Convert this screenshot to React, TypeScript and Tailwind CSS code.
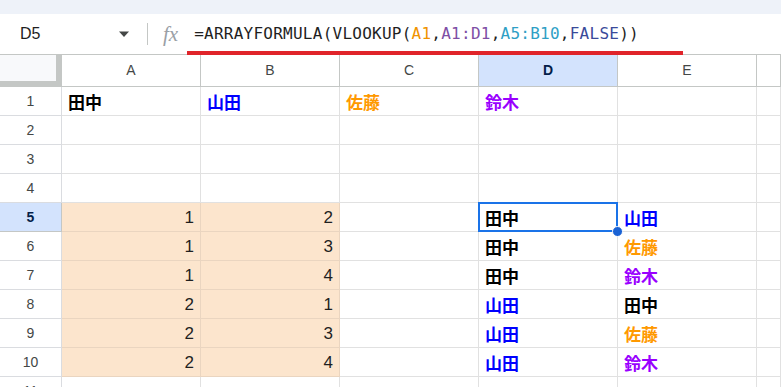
import React from 'react';

type Cell = { text: string; color?: string; num?: boolean };

const TANAKA = { text: '田中', color: 'text-black' };
const YAMADA = { text: '山田', color: 'text-[#0000ff]' };
const SATO = { text: '佐藤', color: 'text-[#ff9900]' };
const SUZUKI = { text: '鈴木', color: 'text-[#9900ff]' };

const cols = ['A', 'B', 'C', 'D', 'E', ''];

// rows 1..11, columns A..F
const rows: (Cell | null)[][] = [
  [TANAKA, YAMADA, SATO, SUZUKI, null, null],
  [null, null, null, null, null, null],
  [null, null, null, null, null, null],
  [null, null, null, null, null, null],
  [{ text: '1', num: true }, { text: '2', num: true }, null, TANAKA, YAMADA, null],
  [{ text: '1', num: true }, { text: '3', num: true }, null, TANAKA, SATO, null],
  [{ text: '1', num: true }, { text: '4', num: true }, null, TANAKA, SUZUKI, null],
  [{ text: '2', num: true }, { text: '1', num: true }, null, YAMADA, TANAKA, null],
  [{ text: '2', num: true }, { text: '3', num: true }, null, YAMADA, SATO, null],
  [{ text: '2', num: true }, { text: '4', num: true }, null, YAMADA, SUZUKI, null],
  [null, null, null, null, null, null],
];

const FormulaBar = () => (
  <div className="relative flex h-[41px] items-center border-b border-[#c4c7c5] bg-white">
    <div className="w-[108px] pl-[20px] text-[16px] text-[#1f1f1f] [font-family:'Liberation_Sans',Arial,sans-serif]">
      D5
    </div>
    <svg width="12" height="8" viewBox="0 0 12 8" className="ml-[10px]">
      <path d="M1 1.5h10L6 7z" fill="#444746" />
    </svg>
    <div className="ml-[17px] h-[22px] w-px bg-[#c4c7c5]" />
    <div className="ml-[15px] text-[21px] italic leading-none text-[#9aa0a6] [font-family:'Liberation_Serif',serif]">
      fx
    </div>
    <div className="ml-[16px] text-[16px] tracking-[0.25px] text-[#1f1f1f] [font-family:'DejaVu_Sans_Mono','Liberation_Mono',monospace]">
      =ARRAYFORMULA(VLOOKUP(<span className="text-[#f09300]">A1</span>,
      <span className="text-[#7e4ea5]">A1:D1</span>,
      <span className="text-[#2f9fc5]">A5:B10</span>,
      <span className="text-[#3a4a9a]">FALSE</span>))
    </div>
    {/* red annotation underline */}
    <div className="absolute bottom-[-1px] left-[187px] h-[4px] w-[496px] bg-[#e0242a]" />
  </div>
);

const App: React.FC = () => {
  return (
    <div className="h-[387px] w-[781px] overflow-hidden bg-white [font-family:'Liberation_Sans',Arial,sans-serif]">
      <div className="h-[14px] bg-[#eef2f9]" />
      <FormulaBar />

      <div className="grid grid-cols-[62px_139px_139px_139px_139px_139px_1fr]">
        {/* corner */}
        <div className="h-[32px] border-r-[6px] border-b-[6px] border-[#c4c7c5] bg-[#f8f9fb]" />
        {cols.map((c, i) => (
          <div
            key={'h' + i}
            className={
              'flex h-[32px] items-center justify-center border-r border-b border-[#c4c7c5] text-[14px] ' +
              (c === 'D' ? 'bg-[#d3e3fd] font-bold text-[#041e49]' : 'bg-white text-[#444746]')
            }
          >
            {c}
          </div>
        ))}

        {rows.map((r, ri) => {
          const n = ri + 1;
          const selRow = n === 5;
          return (
            <React.Fragment key={'r' + n}>
              <div
                className={
                  'flex h-[29px] items-center justify-center border-r border-b text-[14px] ' +
                  (selRow
                    ? 'border-[#c4c7c5] bg-[#d3e3fd] font-bold text-[#041e49]'
                    : 'border-[#dadce0] bg-white text-[#444746]')
                }
              >
                {n}
              </div>
              {r.map((cell, ci) => {
                const inRange = n >= 5 && n <= 10 && ci <= 1;
                const selected = n === 5 && ci === 3;
                return (
                  <div
                    key={'c' + n + '-' + ci}
                    className={
                      'relative flex h-[29px] items-end border-r border-b px-[6px] pb-[3px] ' +
                      (inRange ? 'border-[#ead5c0] bg-[#fce5cd] ' : 'border-[#e1e1e1] bg-white ') +
                      (cell?.num ? 'justify-end' : 'justify-start')
                    }
                  >
                    {cell &&
                      (cell.num ? (
                        <span className="text-[17px] leading-[20px] text-[#1f1f1f]">{cell.text}</span>
                      ) : (
                        <span
                          className={
                            'text-[17px] font-bold leading-[20px] [font-family:"Noto_Sans_CJK_JP",sans-serif] ' +
                            cell.color
                          }
                        >
                          {cell.text}
                        </span>
                      ))}
                    {selected && (
                      <>
                        <div className="pointer-events-none absolute inset-[-1px] border-2 border-[#1a73e8]" />
                        <div className="absolute bottom-[-6px] right-[-6px] z-10 h-[11px] w-[11px] rounded-full border border-white bg-[#1a62d4]" />
                      </>
                    )}
                  </div>
                );
              })}
            </React.Fragment>
          );
        })}
      </div>
    </div>
  );
};

export default App;
